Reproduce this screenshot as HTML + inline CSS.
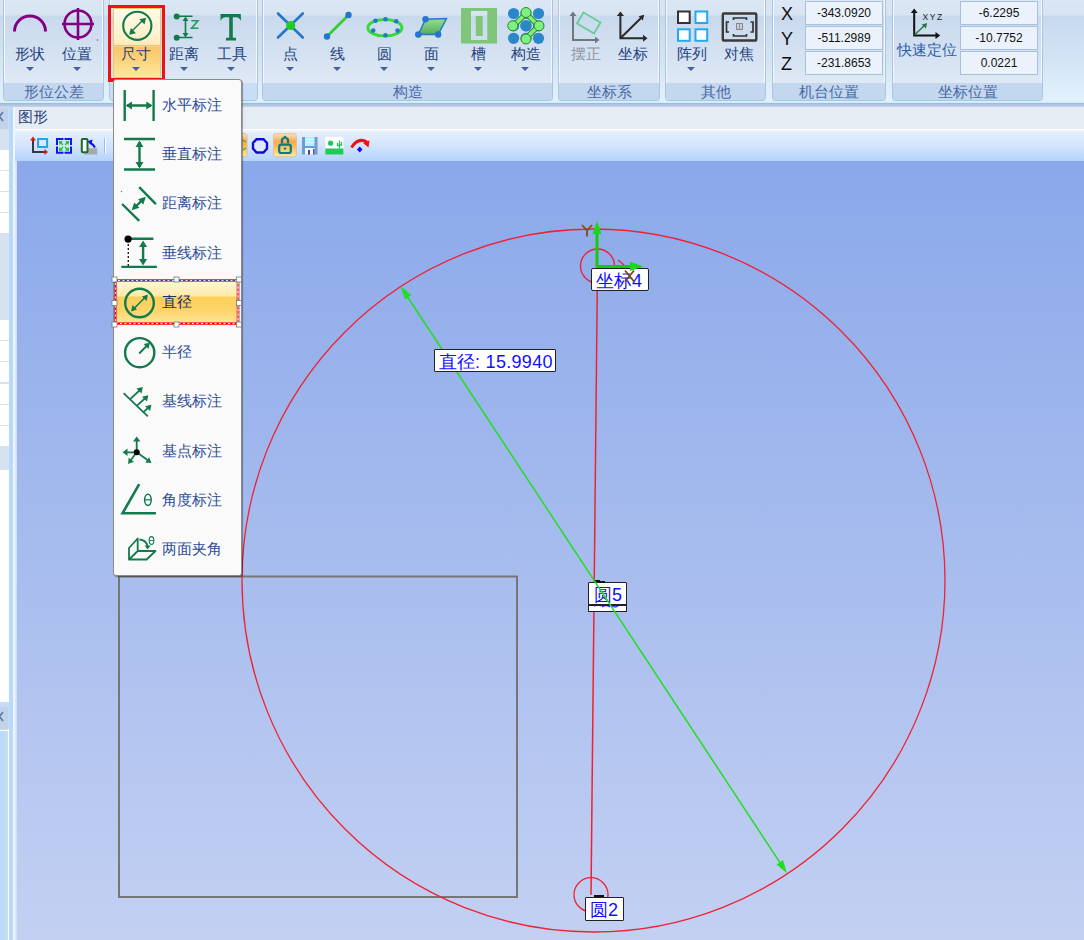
<!DOCTYPE html>
<html><head><meta charset="utf-8">
<style>
*{margin:0;padding:0;box-sizing:border-box}
html,body{width:1084px;height:940px;overflow:hidden;background:#c6d8ee;font-family:"Liberation Sans",sans-serif}
.a{position:absolute}
#ribbon{left:0;top:0;width:1084px;height:102px;background:linear-gradient(#dbe6f3 0,#d6e3f2 15px,#c7d9ee 16px,#d3e4f5 60px,#e2f1fc 100px)}
.grp{position:absolute;top:0;height:101px;border:1px solid #adc4de;border-top:none;border-radius:0 0 4px 4px;background:linear-gradient(#dce7f4 0,#d7e4f2 15px,#c9d9ed 16px,#d6e3f2 60px,#dfe9f6 82px);box-shadow:inset 1px 0 0 #f2f7fd,inset -1px 0 0 #f2f7fd}
.grp .gl{position:absolute;left:0;right:0;bottom:0;height:17px;background:#c3d7ee;color:#4a6aa6;font-size:15px;line-height:17px;text-align:center;border-radius:0 0 3px 3px}
.lbl{position:absolute;top:45px;font-size:15px;line-height:18px;color:#24437f;text-align:center;white-space:nowrap}
.arr{position:absolute;top:67px;width:0;height:0;border-left:4px solid transparent;border-right:4px solid transparent;border-top:4px solid #40609e}
.inp{position:absolute;width:78px;height:24px;border:1px solid #a9c0dc;background:#ebf2fc;font-size:12px;line-height:22px;text-align:center;color:#111}
.lb{font-size:17px;line-height:20px;color:#1010ff;white-space:nowrap}.lb .c{font-size:17.5px}.lb .d{font-size:18px;letter-spacing:0.3px}
.mt{left:162px;font-size:14.5px;line-height:18px;color:#2d4c96;white-space:nowrap}
.xyz{position:absolute;left:781px;font-size:18px;line-height:20px;color:#111}
</style></head><body>
<div id="ribbon" class="a"></div>
<!-- groups -->
<div class="grp" style="left:3px;width:101px"><div class="gl">形位公差</div></div>
<div class="grp" style="left:109px;width:149px"><div class="gl" style="background:#c8ddf6"></div></div>
<div class="grp" style="left:262px;width:291px"><div class="gl">构造</div></div>
<div class="grp" style="left:558px;width:102px"><div class="gl">坐标系</div></div>
<div class="grp" style="left:665px;width:101px"><div class="gl">其他</div></div>
<div class="grp" style="left:772px;width:114px"><div class="gl">机台位置</div></div>
<div class="grp" style="left:892px;width:151px"><div class="gl">坐标位置</div></div>

<!-- chicun button -->
<div class="a" style="left:113px;top:8px;width:48px;height:70px;border:1px solid #e8c868;border-radius:2px;background:linear-gradient(#fffae6 0,#fdf0c8 30px,#fce8b0 37px,#fbe4a8 37px,#f9c46a 38px,#fbd27a 50px,#fde89e 68px)"></div>
<div class="a" style="left:114px;top:45px;width:46px;height:1px;background:#e2c680"></div>
<div class="a lbl" style="left:116px;width:40px;color:#24437f">尺寸</div><div class="arr" style="left:132px"></div>
<div class="a" style="left:108px;top:5px;width:57px;height:77px;border:3px solid #ee1118;border-bottom-width:4px"></div>
<svg class="a" style="left:0;top:0" width="1084" height="80">
 <!-- shape arc -->
 <path d="M14.5 31.5 A15.5 15.5 0 0 1 45.5 31.5" stroke="#800080" stroke-width="3" fill="none"/>
 <!-- position -->
 <circle cx="78" cy="24" r="13.5" stroke="#800080" stroke-width="2.6" fill="none"/>
 <path d="M78 8 V40 M62 24 H94" stroke="#800080" stroke-width="2.6"/>
 <circle cx="97.5" cy="40" r="0.8" fill="#a040a0"/>
 <!-- diameter -->
 <circle cx="137.3" cy="25.8" r="14.1" stroke="#137a4c" stroke-width="2.1" fill="none"/>
 <path d="M132 31 L142.5 20.5" stroke="#137a4c" stroke-width="1.4"/>
 <path d="M129.2 34.7 L130.8 28 L136 33.2Z M146.1 17.7 L144.5 24.4 L139.3 19.2Z" fill="#137a4c"/>
 <!-- distance z -->
 <circle cx="176.7" cy="16.5" r="3" fill="#137a4c"/><circle cx="176.7" cy="37.7" r="3" fill="#137a4c"/>
 <path d="M177 16.3 H192.5 M177 37.5 H192.5 M185.5 19 V35" stroke="#137a4c" stroke-width="1.6"/>
 <path d="M185.5 16.5 L182.5 21 H188.5Z M185.5 37.5 L182.5 33 H188.5Z" fill="#137a4c"/>
 <path d="M191.3 20.8 H198 L191.5 28.3 H198.5" stroke="#2a9a5a" stroke-width="1.6" fill="none"/>
 <!-- T -->
 <path d="M220.5 14 H240.8 L241 21 Q239.5 17.5 236 17.2 H232.8 V37.8 H236 V40.6 H226 V37.8 H229.2 V17.2 H225.5 Q222 17.5 220.5 21 Z" fill="#137a4c"/>
 <!-- point -->
 <path d="M278 13.5 L302.8 37.5 M302.8 13.5 L278 37.5" stroke="#2277cc" stroke-width="2.6" stroke-linecap="round"/>
 <circle cx="290.7" cy="25.5" r="4.6" fill="#22cc22"/>
 <!-- line -->
 <path d="M327 36.5 L348.5 15" stroke="#33cc33" stroke-width="2.6"/>
 <circle cx="327" cy="36.5" r="3.2" fill="#2277cc"/><circle cx="348.5" cy="15" r="3.2" fill="#2277cc"/>
 <!-- circle ellipse -->
 <ellipse cx="384.9" cy="27.7" rx="17" ry="8.3" stroke="#33dd33" stroke-width="3" fill="none"/>
 <g fill="#2277cc">
  <circle cx="375.5" cy="20.8" r="2.3"/><circle cx="385.5" cy="19.3" r="2.3"/><circle cx="396.2" cy="21.3" r="2.3"/>
  <circle cx="373.2" cy="30.6" r="2.3"/><circle cx="385.5" cy="35.3" r="2.3"/><circle cx="397.6" cy="30.6" r="2.3"/>
 </g>
 <!-- plane -->
 <defs><linearGradient id="pg" x1="0" y1="0" x2="0" y2="1"><stop offset="0" stop-color="#94e094"/><stop offset="1" stop-color="#56aa5a"/></linearGradient></defs>
 <path d="M425.5 19.3 L446.5 18.5 L438.2 34.5 L418.3 34.5Z" fill="url(#pg)" stroke="#2277cc" stroke-width="1.4"/>
 <circle cx="425.5" cy="19.3" r="3.2" fill="#2277cc"/><circle cx="418.3" cy="34.5" r="3.3" fill="#2277cc"/><circle cx="438.2" cy="34.5" r="3.2" fill="#2277cc"/>
 <!-- slot -->
 <path d="M461 8 H497 V43.5 H461Z M471 11 V40 H487.3 V11Z" fill="#7fc67a" fill-rule="evenodd"/>
 <rect x="475.8" y="16" width="6.9" height="20" fill="#7fc67a"/>
 <!-- construct -->
 <g fill="#2a88c8">
  <circle cx="513.6" cy="13.5" r="5.6"/><circle cx="526" cy="13.5" r="5.6"/><circle cx="538.5" cy="13.5" r="5.6"/>
  <circle cx="513.6" cy="25.8" r="5.6"/><circle cx="526" cy="25.8" r="5.6"/><circle cx="538.5" cy="25.8" r="5.6"/>
  <circle cx="513.6" cy="38.3" r="5.6"/><circle cx="526" cy="38.3" r="5.6"/><circle cx="538.5" cy="38.3" r="5.6"/>
 </g>
 <path d="M513.6 25.8 L526 13.5 L538.5 25.8 L526 38.3" stroke="#2e8a2e" stroke-width="5.5" fill="none" stroke-linejoin="round"/>
 <path d="M513.6 25.8 L526 13.5 L538.5 25.8 L526 38.3" stroke="#7ef07e" stroke-width="3.5" fill="none" stroke-linejoin="round"/>
 <g fill="#7ef07e" stroke="#2e8a2e" stroke-width="1">
  <circle cx="526" cy="12.5" r="5"/><circle cx="512.8" cy="25.8" r="5"/><circle cx="539" cy="25.8" r="5"/><circle cx="526" cy="39" r="5"/>
 </g>
 <circle cx="526" cy="25.8" r="5.6" fill="#2a88c8"/>
 <!-- align -->
 <path d="M573 14 V40 H597" stroke="#6f7780" stroke-width="2" fill="none"/>
 <path d="M573 11.5 L569.5 16 H576.5Z M599.5 40 L595 36.5 V43.5Z" fill="#6f7780"/>
 <path d="M583.5 12.5 L600.5 22.5 L594 33.5 L577 23.5Z" stroke="#66cc99" stroke-width="1.8" fill="none"/>
 <!-- coord -->
 <path d="M620.4 14 V38.3 H645 M620.4 38.3 L641.5 17.5" stroke="#2a2a2a" stroke-width="2" fill="none"/>
 <path d="M620.4 11.5 L616.8 16 H624Z M647.5 38.3 L643 34.8 V41.8Z M644.3 14.8 L642.8 20.5 L638.6 16.3Z" fill="#2a2a2a"/>
 <!-- array -->
 <rect x="678" y="11.5" width="11.7" height="11.5" stroke="#333" stroke-width="2" fill="#fff"/>
 <rect x="695.5" y="11.5" width="11.7" height="11.5" stroke="#22aaee" stroke-width="2" fill="#fff"/>
 <rect x="678" y="29.3" width="11.7" height="11.5" stroke="#22aaee" stroke-width="2" fill="#fff"/>
 <rect x="695.5" y="29.3" width="11.7" height="11.5" stroke="#22aaee" stroke-width="2" fill="#fff"/>
 <!-- focus -->
 <rect x="722.8" y="13.5" width="33.5" height="27" stroke="#3a3a3a" stroke-width="2.4" fill="none" rx="1"/>
 <path d="M733.5 20 V18 H746.5 V20 M733.5 34 V36 H746.5 V34 M729 22 H726.5 V32 H729 M750.5 22 H753 V32 H750.5" stroke="#333" stroke-width="1.7" fill="none"/>
 <rect x="736.5" y="23.5" width="6" height="6" stroke="#888" stroke-width="1" fill="#ccd"/>
 <path d="M739.5 23.5 V29.5" stroke="#888" stroke-width="0.8"/>
 <!-- quick locate -->
 <path d="M914.2 11 V35.5 H937" stroke="#111" stroke-width="2" fill="none"/>
 <path d="M914.2 8.5 L910.8 13 H917.6Z M940.2 35.5 L935.5 32 V39Z" fill="#111"/>
 <path d="M914.5 35 L925 25" stroke="#1f7a3a" stroke-width="1.4"/>
 <path d="M927.2 23 L925.8 28.5 L921.8 24.5Z" fill="#1f7a3a"/>
 <text x="922.5" y="20.3" font-family="Liberation Sans" font-size="8.5" fill="#222" letter-spacing="1.6">XYZ</text>
</svg>
<!-- labels -->
<div class="lbl" style="left:10px;width:40px">形状</div><div class="arr" style="left:26px"></div>
<div class="lbl" style="left:57px;width:40px">位置</div><div class="arr" style="left:73px"></div>
<div class="lbl" style="left:164px;width:40px">距离</div><div class="arr" style="left:180px"></div>
<div class="lbl" style="left:212px;width:40px">工具</div><div class="arr" style="left:227px"></div>
<div class="lbl" style="left:270px;width:40px">点</div><div class="arr" style="left:286px"></div>
<div class="lbl" style="left:317px;width:40px">线</div><div class="arr" style="left:333px"></div>
<div class="lbl" style="left:364px;width:40px">圆</div><div class="arr" style="left:380px"></div>
<div class="lbl" style="left:411px;width:40px">面</div><div class="arr" style="left:427px"></div>
<div class="lbl" style="left:458px;width:40px">槽</div><div class="arr" style="left:474px"></div>
<div class="lbl" style="left:506px;width:40px">构造</div><div class="arr" style="left:521px"></div>
<div class="lbl" style="left:566px;width:40px;color:#8e959e">摆正</div>
<div class="lbl" style="left:613px;width:40px">坐标</div>
<div class="lbl" style="left:672px;width:40px">阵列</div><div class="arr" style="left:687px"></div>
<div class="lbl" style="left:719px;width:40px">对焦</div>

<div class="xyz" style="top:4px">X</div>
<div class="xyz" style="top:29px">Y</div>
<div class="xyz" style="top:54px">Z</div>
<div class="inp" style="left:805px;top:1px">-343.0920</div>
<div class="inp" style="left:805px;top:26px">-511.2989</div>
<div class="inp" style="left:805px;top:51px">-231.8653</div>
<div class="inp" style="left:960px;top:1px">-6.2295</div>
<div class="inp" style="left:960px;top:26px">-10.7752</div>
<div class="inp" style="left:960px;top:51px">0.0221</div>
<div class="lbl" style="left:895px;width:64px;top:41px;color:#2f5fae">快速定位</div>

<!-- below ribbon -->
<div class="a" style="left:0;top:101px;width:1084px;height:1px;background:#d4f2fc"></div>
<div class="a" style="left:0;top:102px;width:1084px;height:1px;background:#c2f4fd"></div>
<div class="a" style="left:0;top:103px;width:1084px;height:4px;background:linear-gradient(#9fb5d6,#c4d4ec)"></div>
<div class="a" style="left:0;top:107px;width:1084px;height:833px;background:#c4dcf8"></div>
<div class="a" style="left:14px;top:107px;width:1070px;height:23px;background:#e6ecf4"></div>
<div class="a" style="left:18px;top:105px;font-size:15px;line-height:24px;color:#1e3e7e">图形</div>
<div class="a" style="left:14px;top:129px;width:1070px;height:32px;background:linear-gradient(#f4f8fd 0,#e4effc 2px,#cfe2fb 18px,#b3d3fd 31px);border-top:1px solid #fff"></div>

<!-- toolbar icons -->
<svg class="a" style="left:0;top:125px" width="380" height="36">
 <g transform="translate(0,-125)">
 <path d="M33 140 V152 H45" stroke="#333a44" stroke-width="2" fill="none"/>
 <path d="M33 136.6 L30 140.5 H36Z" fill="#ee1111"/><path d="M48.1 152 L44.5 149 V155Z" fill="#ee1111"/>
 <rect x="38.1" y="139" width="9" height="8" stroke="#1ea6f0" stroke-width="2" fill="#dceafc"/>
 <path d="M57 145 V139 H63.5 M64.5 139 H71 V145 M57 146.5 V152.7 H63.5 M64.5 152.7 H71 V146.5" stroke="#1414f0" stroke-width="2" fill="none"/>
 <path d="M59.5 141.5 L63 145 M68.5 141.5 L65 145 M59.5 150.5 L63 147 M68.5 150.5 L65 147" stroke="#22cc22" stroke-width="1.4"/>
 <path d="M59 141 L63 141.5 L59.5 145Z M69 141 L65 141.5 L68.5 145Z M59 151 L59.5 147 L63 150.5Z M69 151 L68.5 147 L65 150.5Z" fill="#11cc11"/>
 <rect x="84.2" y="148.2" width="13" height="6.3" fill="#a8a8a8"/>
 <rect x="81.8" y="139" width="5.7" height="13.3" rx="1" stroke="#1a6a2a" stroke-width="2" fill="#fff"/>
 <path d="M89.5 142.5 Q93 144 95 147.5" stroke="#1111ee" stroke-width="2" fill="none"/>
 <path d="M87.5 141.2 L92.5 139.5 L91.5 145Z" fill="#1111ee"/>
 <path d="M104.6 138 V153.5" stroke="#9ab8e0" stroke-width="1"/><path d="M105.6 138 V153.5" stroke="#fff" stroke-width="1"/>
 <rect x="236" y="133.5" width="11" height="23" rx="2" fill="url(#og)" stroke="#d8b890" stroke-width="0.8"/>
 <path d="M243 140 L246 142 M243 150 L246 148" stroke="#44aa44" stroke-width="1.5"/>
 <path d="M256.5 139.2 L263.5 139.2 L267 143 L267 148.5 L263.5 152.5 L256.5 152.5 L253 148.5 L253 143Z" stroke="#1010ee" stroke-width="2.4" fill="#dde8fc"/>
 <path d="M256.5 139.2 L263.5 139.2 L267 143 L267 148.5 L263.5 152.5 L256.5 152.5 L253 148.5 L253 143Z" stroke="#000" stroke-width="1" stroke-dasharray="1 2.5" fill="none"/>
 <defs><linearGradient id="og" x1="0" y1="0" x2="0" y2="1"><stop offset="0" stop-color="#fde2c0"/><stop offset="0.35" stop-color="#fba94a"/><stop offset="0.6" stop-color="#fcc060"/><stop offset="1" stop-color="#fde99a"/></linearGradient></defs>
 <rect x="273.5" y="133.6" width="22.9" height="23.2" rx="2" fill="url(#og)" stroke="#d8bc98" stroke-width="0.8"/>
 <path d="M282 143.5 V139.5 L285 137 L288 139.5 V143.5" stroke="#0a7a7a" stroke-width="2.2" fill="none"/>
 <rect x="279.2" y="144.6" width="11.6" height="8.4" rx="2" stroke="#0a7a7a" stroke-width="2.2" fill="none"/>
 <circle cx="285" cy="148.6" r="1.2" fill="#0a7a7a"/>
 <rect x="302" y="137" width="15.5" height="17.5" fill="#6c9cd8"/>
 <rect x="305" y="137" width="9.5" height="9" fill="#b2f2fa"/>
 <path d="M305 139.5 H314.5 M305 142.5 H314.5" stroke="#d8fcff" stroke-width="0.8"/>
 <rect x="305" y="148" width="9.5" height="6.6" fill="#f4f8ff"/>
 <rect x="308" y="150" width="2" height="4.6" fill="#4a40a8"/><rect x="313" y="149" width="1.5" height="5.6" fill="#5a4ab0"/>
 <rect x="325.3" y="136.8" width="18.1" height="17.8" fill="#fff"/>
 <rect x="325.3" y="148.5" width="18.1" height="6.1" fill="#22c85a"/>
 <circle cx="330.6" cy="143.2" r="2.6" fill="#22c85a"/>
 <path d="M339.5 140.5 V148.5 M337.5 143 V145.5 H339.5 M341.5 142 V145 H339.5" stroke="#22c85a" stroke-width="1.3" fill="none"/>
 <path d="M351.5 147.5 Q358 137 367 142" stroke="#ee1111" stroke-width="3" fill="none"/>
 <path d="M369.5 140.5 L368.5 147.5 L363 143Z" fill="#ee1111"/>
 <path d="M359.7 146.5 L362.5 149.5 L359.7 152.5 L356.9 149.5Z" fill="#1111ee"/>
 </g>
</svg>
<!-- left panel -->
<div class="a" style="left:0;top:107px;width:9px;height:595px;background:#c8dcf4"></div>
<div class="a" style="left:0;top:150px;width:9px;height:552px;background:#fff"></div>
<div class="a" style="left:0;top:108px;width:8px;height:21px;background:#c1d3e9"></div>
<svg class="a" style="left:0;top:108px" width="9" height="21"><path d="M3 4 L-0.5 8.5 L3 13" stroke="#5a7aa8" stroke-width="1.6" fill="none"/></svg>
<div class="a" style="left:0;top:129px;width:9px;height:21px;background:#d6e2f0"></div>
<div class="a" style="left:0;top:150px;width:9px;height:84px;background:repeating-linear-gradient(#fff 0,#fff 20px,#d8e2ee 20px,#d8e2ee 21px)"></div>
<div class="a" style="left:0;top:234px;width:9px;height:86px;background:#d6e2f0"></div>
<div class="a" style="left:0;top:320px;width:9px;height:127px;background:repeating-linear-gradient(#fff 0,#fff 20px,#d8e2ee 20px,#d8e2ee 21.2px)"></div>
<div class="a" style="left:0;top:447px;width:9px;height:23px;background:#d6e2f0"></div>
<div class="a" style="left:0;top:707px;width:8px;height:22px;background:#c1d3e9"></div>
<svg class="a" style="left:0;top:707px" width="9" height="22"><path d="M3 5 L-0.5 9.5 L3 14" stroke="#5a7aa8" stroke-width="1.6" fill="none"/></svg>
<div class="a" style="left:0;top:730px;width:8px;height:210px;background:linear-gradient(90deg,#bcdafc 0,#bcdafc 5px,#d2deea 8px);border-top:1px solid #fff"></div>
<div class="a" style="left:8px;top:729px;width:1px;height:211px;background:#fff"></div>
<div class="a" style="left:9px;top:107px;width:4px;height:833px;background:#b9d8fc"></div>
<div class="a" style="left:13px;top:107px;width:2px;height:833px;background:#eef6fe"></div>
<div class="a" style="left:14px;top:161px;width:3px;height:779px;background:linear-gradient(90deg,#f4f9ff 0,#e0ecfa 1px,#cfdcee 3px)"></div>

<!-- canvas -->
<div class="a" id="cv" style="left:17px;top:161px;width:1067px;height:779px;background:linear-gradient(#8aa8ea,#c3d0f2)"></div>
<svg class="a" style="left:0;top:0" width="1084" height="940">
 <rect x="119" y="576.5" width="398" height="320.5" fill="none" stroke="#767676" stroke-width="2"/>
 <circle cx="593.5" cy="580.5" r="351.5" fill="none" stroke="#ee2233" stroke-width="1.3"/>
 <circle cx="597.5" cy="266" r="17" fill="none" stroke="#ee2233" stroke-width="1.3"/>
 <path d="M618 260 L624 265" stroke="#ee2233" stroke-width="1.3"/>
 <circle cx="591" cy="894.7" r="17" fill="none" stroke="#ee2233" stroke-width="1.3"/>
 <line x1="597.5" y1="266" x2="591" y2="894.7" stroke="#ee2233" stroke-width="1.5"/>
 <line x1="403" y1="290" x2="442.5" y2="350" stroke="#22dd22" stroke-width="1.5"/>
 <path d="M400.7 286.6 L405 299.5 L411.5 295 Z" fill="#22dd22"/>
 <path d="M787 873.2 L776.5 864.5 L783 860 Z" fill="#22dd22"/>
 <!-- axes -->
 <line x1="597" y1="230" x2="597" y2="267" stroke="#11cc11" stroke-width="3"/>
 <path d="M597 221 L601.5 234 L592.5 234 Z" fill="#11dd11"/>
 <line x1="596" y1="266.5" x2="633" y2="266.5" stroke="#11cc11" stroke-width="3"/>
 <path d="M643 266.5 L630 262 L630 271 Z" fill="#11dd11"/>
 <path d="M582 225 L587 230.5 L592 225 M587 230.5 L587 236.5" stroke="#8a4a10" stroke-width="1.8" fill="none"/>
</svg>
<div class="a" style="left:591px;top:268px;width:58px;height:23px;background:#fff;border:1.5px solid #222;border-radius:2px"></div>
<div class="a lb" style="left:596px;top:271px"><span class="c">坐标</span><span class="d">4</span></div>
<svg class="a" style="left:620px;top:260px" width="30" height="26"><path d="M23 6.5 L10 2 L10 11 Z" fill="#11dd11"/><path d="M5 10.5 L14 21.5 M14 10.5 L5 21.5" stroke="#7a4210" stroke-width="1.7"/></svg>
<div class="a" style="left:588px;top:582px;width:39px;height:30px;background:#fff;border:1.5px solid #222;border-radius:1px"></div>
<div class="a lb" style="left:594px;top:585px"><span class="c">圆</span><span class="d">5</span></div>
<div class="a" style="left:588px;top:606px;width:39px;height:6px;background:#fff;border:1.5px solid #222;border-top:none"></div>
<svg class="a" style="left:588px;top:600px" width="40" height="10"><path d="M6 6 Q10 4 13 6 M14 7 Q18 4 22 7 M24 6 Q27 8 30 6" stroke="#3030ff" stroke-width="1.5" fill="none"/></svg>
<div class="a" style="left:588px;top:604px;width:39px;height:2px;background:#222"></div>
<div class="a" style="left:594px;top:580px;width:6px;height:2px;background:#111"></div>
<div class="a" style="left:599px;top:581px;width:6px;height:1.5px;background:#111"></div>
<div class="a" style="left:585px;top:897px;width:39px;height:24px;background:#fff;border:1.5px solid #222;border-radius:1px"></div>
<div class="a" style="left:594px;top:895px;width:10px;height:2px;background:#111"></div>
<div class="a lb" style="left:590px;top:900px"><span class="c">圆</span><span class="d">2</span></div>
<svg class="a" style="left:0;top:0" width="1084" height="940">
 <line x1="454.9" y1="369" x2="783.1" y2="867.3" stroke="#22dd22" stroke-width="1.5"/>
</svg>
<div class="a" style="left:434px;top:349px;width:122px;height:23px;background:#fff;border:1.5px solid #222;border-radius:1px"></div>
<div class="a lb" style="left:439px;top:352px"><span class="c">直径</span><span class="d">: 15.9940</span></div>
<!-- menu -->
<div class="a" style="left:113px;top:79px;width:129px;height:497px;background:#fafafa;border:1px solid #8a8a8a;border-radius:3px;box-shadow:1px 1px 1px rgba(0,0,0,.35)"></div>
<div class="a" style="left:115px;top:280px;width:124px;height:45px;background:linear-gradient(#fef7dc 0,#fdeaa8 16px,#fbd05a 17px,#fcd468 30px,#fde99a 44px)"></div>
<svg class="a" style="left:0;top:0" width="260" height="600">
 <rect x="114.5" y="279.5" width="124.5" height="45" fill="none" stroke="#ff3a3a" stroke-width="1"/>
 <rect x="115.5" y="280.5" width="122.5" height="43" fill="none" stroke="#ffd8d8" stroke-width="1"/>
 <rect x="115.5" y="280.5" width="122.5" height="43" fill="none" stroke="#3a3a9a" stroke-width="1" stroke-dasharray="2.5 2"/>
 <rect x="116.5" y="281.5" width="120.5" height="41" fill="none" stroke="#ff5a5a" stroke-width="1"/>
 <g fill="#fff" stroke="#777" stroke-width="0.8">
  <rect x="112" y="277" width="5" height="5"/><rect x="174" y="277" width="5" height="5"/><rect x="236.5" y="277" width="5" height="5"/>
  <rect x="112" y="300.5" width="5" height="5"/><rect x="236.5" y="300.5" width="5" height="5"/>
  <rect x="112" y="322" width="5" height="5"/><rect x="174" y="322" width="5" height="5"/><rect x="236.5" y="322" width="5" height="5"/>
 </g>
 <g stroke="#137a4c" stroke-width="2.4" fill="none" stroke-linecap="butt">
  <!-- 1 horizontal -->
  <path d="M124.7 90 V121 M153.6 90 V121 M127 105.5 H151"/>
  <!-- 2 vertical -->
  <path d="M124 139 H155 M124 169.5 H155 M139.5 142 V167"/>
  <!-- 3 distance -->
  <path d="M139.2 187.1 L155.9 204.2 M122.1 204 L139.2 220.9 M133.5 208.5 L144 198.5"/>
  <!-- 4 perp -->
  <path d="M131 238.8 H153.4 M121.3 266.9 H156.9 M143.1 243.5 V262"/>
  <!-- radius -->
  <circle cx="139.7" cy="352.7" r="14.6"/>
 </g>
 <g fill="#137a4c">
  <path d="M125.7 105.5 L132 101.5 V109.5Z M152.6 105.5 L146.3 101.5 V109.5Z"/>
  <path d="M139.5 140.5 L135.5 147 H143.5Z M139.5 168.5 L135.5 162 H143.5Z"/>
  <path d="M131.7 210.3 L134.2 202.6 L139.4 207.8Z M145.8 196.7 L143.3 204.4 L138.1 199.2Z"/>
  <path d="M143.1 240.5 L139.1 247 H147.1Z M143.1 265.5 L139.1 259 H147.1Z"/>
 </g>
 <circle cx="128.1" cy="239.1" r="3.6" fill="#000"/>
 <path d="M128.3 244 V266" stroke="#222" stroke-width="1.4" stroke-dasharray="2 2"/>
 <circle cx="121.5" cy="191.5" r="0.7" fill="#a050c0"/>
 <!-- diameter icon in highlighted -->
 <circle cx="139.5" cy="303" r="14.3" fill="none" stroke="#137a4c" stroke-width="2.4"/>
 <path d="M133 309.5 L146 296.5" stroke="#137a4c" stroke-width="1.6"/>
 <path d="M131 311.5 L132.5 305 L137 309.5Z M148 294.5 L146.5 301 L142 296.5Z" fill="#137a4c"/>
 <!-- radius arrow -->
 <path d="M139.2 353.5 L147 345.5" stroke="#137a4c" stroke-width="1.8"/>
 <path d="M149.8 342.8 L148.5 349 L143.6 344.1Z" fill="#137a4c"/>
 <!-- baseline -->
 <g stroke="#137a4c" stroke-width="1.8" fill="none">
  <path d="M123.6 393.1 L147.8 416.4 M130.2 399.2 L140.5 389.5 M137.2 405.3 L146 397.5 M143.8 411.8 L149.5 406.5"/>
 </g>
 <path d="M142.8 387.1 L141.5 393.5 L136.5 388.6Z M148.3 395.2 L147 401.6 L142 396.7Z M151.4 404.7 L150.1 411.1 L145.1 406.2Z" fill="#137a4c"/>
 <!-- basepoint -->
 <g stroke="#137a4c" stroke-width="1.8" fill="none">
  <path d="M136.7 452.3 V440 M136.7 452.3 H126 M136.7 452.3 L130.5 460.5 M136.7 452.3 L147.5 460"/>
 </g>
 <path d="M136.7 436.6 L133 441.5 H140.4Z M122.6 452.3 L127.5 448.6 V456Z M128.1 463.9 L128.6 457.8 L134 461.8Z M151.4 462.9 L145.2 462.6 L149.2 457.2Z" fill="#137a4c"/>
 <circle cx="136.7" cy="452.3" r="3" fill="#000"/>
 <!-- angle -->
 <path d="M139.2 484.1 L122.6 513.2 H155.9" stroke="#137a4c" stroke-width="2.6" fill="none"/>
 <ellipse cx="147.9" cy="499.8" rx="3.3" ry="5.6" stroke="#137a4c" stroke-width="1.5" fill="none"/><path d="M144.8 499.8 H151" stroke="#137a4c" stroke-width="1.2"/>
 <!-- two planes -->
 <g stroke="#137a4c" stroke-width="1.8" fill="none" stroke-linejoin="round">
  <path d="M137.7 538.5 V551 L129 559.5 V548 Z M137.7 551 H155.5 L146.6 559.5 H129"/>
  <path d="M139.5 539.5 Q146 540 147.6 546"/>
 </g>
 <path d="M147.6 549.5 L144.6 545.5 H150.6Z" fill="#137a4c"/>
 <ellipse cx="151.5" cy="540.5" rx="2.3" ry="3.9" stroke="#137a4c" stroke-width="1.1" fill="none"/><path d="M149.3 540.5 H153.7" stroke="#137a4c" stroke-width="0.9"/>
</svg>
<div class="a mt" style="top:96px">水平标注</div>
<div class="a mt" style="top:145px">垂直标注</div>
<div class="a mt" style="top:194px">距离标注</div>
<div class="a mt" style="top:243.5px">垂线标注</div>
<div class="a mt" style="top:293px;color:#1c2f6e">直径</div>
<div class="a mt" style="top:342.5px">半径</div>
<div class="a mt" style="top:392px">基线标注</div>
<div class="a mt" style="top:441.5px">基点标注</div>
<div class="a mt" style="top:490.5px">角度标注</div>
<div class="a mt" style="top:540px">两面夹角</div>
</body></html>
